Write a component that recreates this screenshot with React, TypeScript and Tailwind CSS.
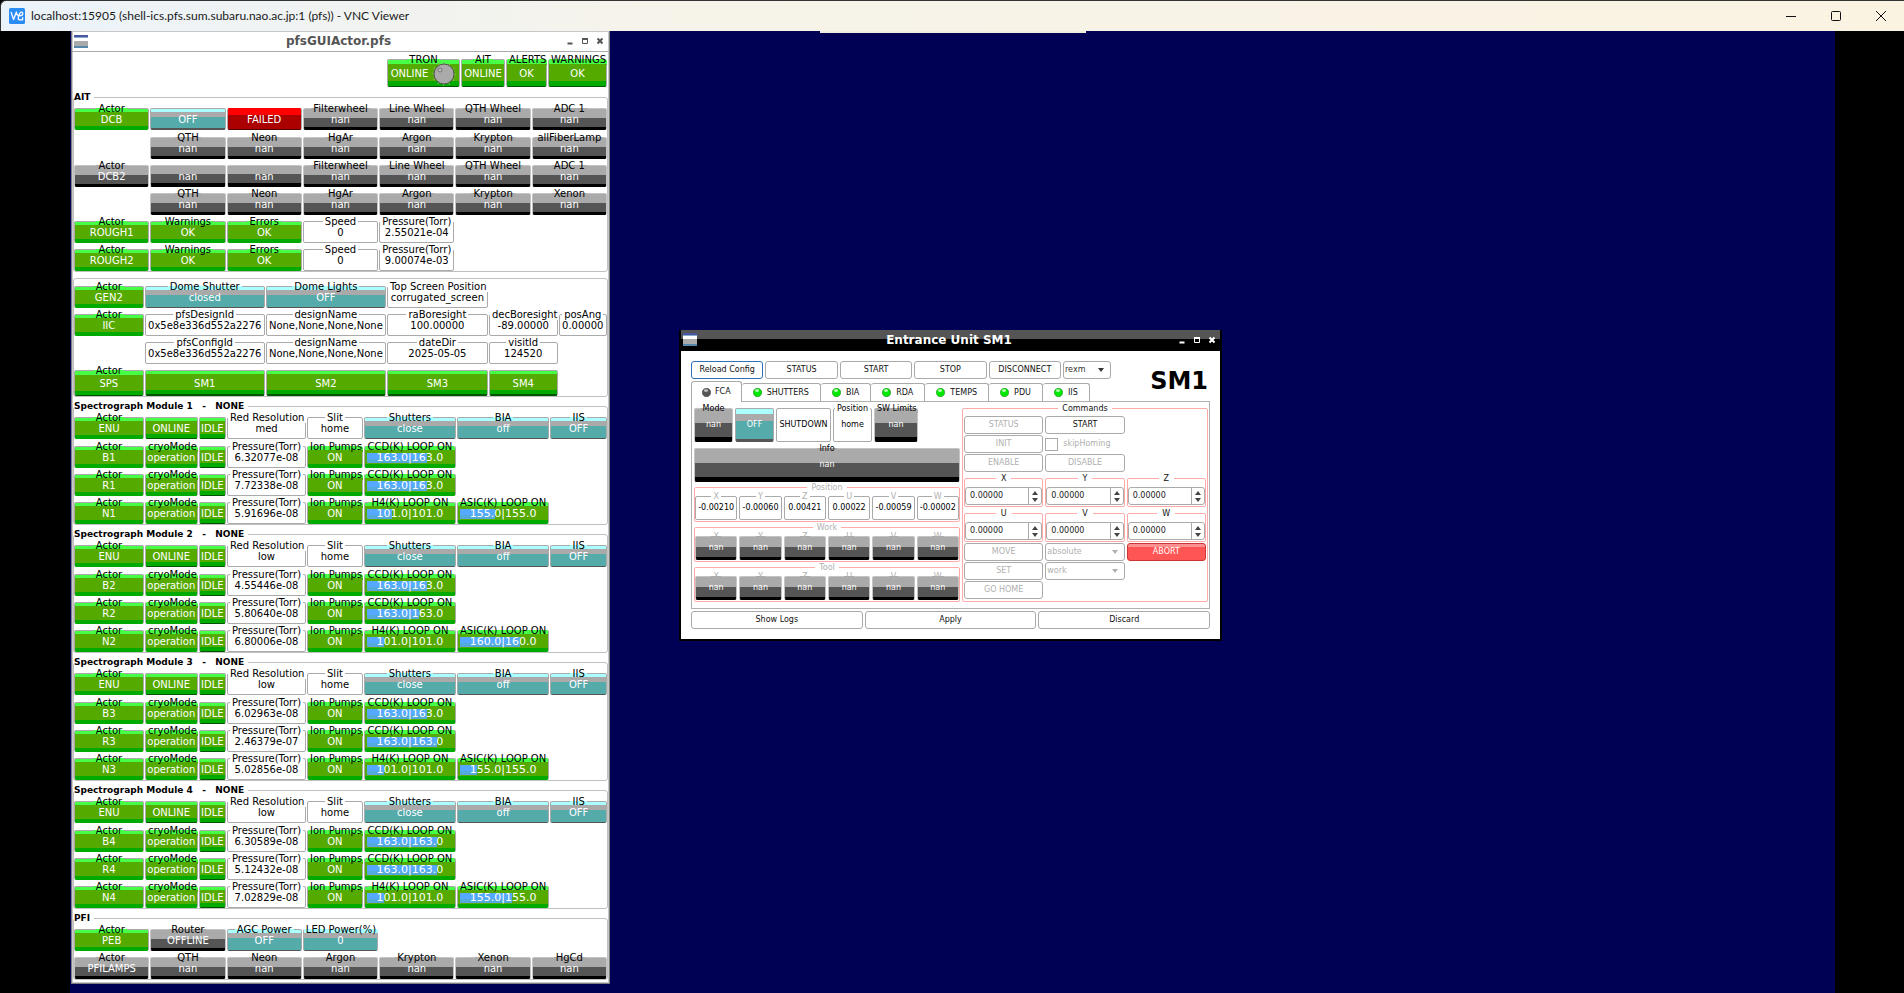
import { ReactNode } from 'react';

type Tone = 'green' | 'teal' | 'gray' | 'red' | 'white';

type Item = {
  label?: string;
  value: string;
  tone: Tone;
  level?: number;
};

const tones: Record<Tone, string> = {
  green:
    'border-[#aaaaaa] border-b-transparent text-white bg-[linear-gradient(to_bottom,#48ff48_17%,#55aa00_17%,#55aa00_77%,#00aa00_77%,#00aa00_94%,#005500_94%)]',
  teal: 'border-[#aaaaaa] border-b-transparent text-white bg-[linear-gradient(to_bottom,#aaffff_18%,#aaaaaa_18%,#aaaaaa_39%,#55aaaa_39%,#55aaaa_92%,#555555_92%)]',
  gray: 'border-[#c4c4c4] border-b-transparent text-white bg-[linear-gradient(to_bottom,#aaaaaa_42%,#555555_42%,#555555_83%,#000000_83%)]',
  red: 'border-[#aaaaaa] border-b-transparent border-t-transparent text-white bg-[linear-gradient(to_bottom,#ff0000_33%,#aa0000_33%,#aa0000_94%,#550000_94%)]',
  white: 'border-[#aaaaaa] bg-white text-black',
};

const moduleCols = 'grid-cols-[69fr_52fr_27fr_78fr_55fr_91fr_91fr_56fr]';
const gen2Cols = 'grid-cols-[69fr_119fr_119fr_100fr_68fr_48fr]';

const nan = (label?: string): Item => ({ label, value: 'nan', tone: 'gray' });
const green = (value: string, label?: string): Item => ({ label, value, tone: 'green' });
const teal = (value: string, label?: string): Item => ({ label, value, tone: 'teal' });
const white = (value: string, label?: string): Item => ({ label, value, tone: 'white' });
const gauge = (label: string, value: string, level: number): Item => ({
  label,
  value,
  tone: 'green',
  level,
});

const wheels = [nan('Filterwheel'), nan('Line Wheel'), nan('QTH Wheel'), nan('ADC 1')];
const lamps = [nan('QTH'), nan('Neon'), nan('HgAr'), nan('Argon'), nan('Krypton')];

const dcb = [green('DCB', 'Actor'), teal('OFF'), { value: 'FAILED', tone: 'red' } as Item, ...wheels];

const aitRows: (Item | null)[][] = [
  [null, ...lamps, nan('allFiberLamp')],
  [{ label: 'Actor', value: 'DCB2', tone: 'gray' }, nan(), nan(), ...wheels],
  [null, ...lamps, nan('Xenon')],
  [green('ROUGH1', 'Actor'), green('OK', 'Warnings'), green('OK', 'Errors'), white('0', 'Speed'), white('2.55021e-04', 'Pressure(Torr)')],
  [green('ROUGH2', 'Actor'), green('OK', 'Warnings'), green('OK', 'Errors'), white('0', 'Speed'), white('9.00074e-03', 'Pressure(Torr)')],
];

const gen2Rows: (Item | null)[][] = [
  [green('GEN2', 'Actor'), teal('closed', 'Dome Shutter'), teal('OFF', 'Dome Lights'), white('corrugated_screen', 'Top Screen Position')],
  [
    green('IIC', 'Actor'),
    white('0x5e8e336d552a2276', 'pfsDesignId'),
    white('None,None,None,None', 'designName'),
    white('100.00000', 'raBoresight'),
    white('-89.00000', 'decBoresight'),
    white('0.00000', 'posAng'),
  ],
  [
    null,
    white('0x5e8e336d552a2276', 'pfsConfigId'),
    white('None,None,None,None', 'designName'),
    white('2025-05-05', 'dateDir'),
    white('124520', 'visitId'),
  ],
];

const spsRow = [green('SPS', 'Actor'), green('SM1'), green('SM2'), green('SM3'), green('SM4')];

const modules = [
  { id: 1, resolution: 'med', pressures: ['6.32077e-08', '7.72338e-08', '5.91696e-08'], ccd: [70, 70], h4: 29, asic: '155.0|155.0', asicLevel: 40 },
  { id: 2, resolution: 'low', pressures: ['4.55446e-08', '5.80640e-08', '6.80006e-08'], ccd: [70, 60], h4: 20, asic: '160.0|160.0', asicLevel: 70 },
  { id: 3, resolution: 'low', pressures: ['6.02963e-08', '2.46379e-07', '5.02856e-08'], ccd: [70, 81], h4: 20, asic: '155.0|155.0', asicLevel: 20 },
  { id: 4, resolution: 'low', pressures: ['6.30589e-08', '5.12432e-08', '7.02829e-08'], ccd: [81, 81], h4: 20, asic: '155.0|155.0', asicLevel: 60 },
];

const pfiRows: Item[][] = [
  [green('PEB', 'Actor'), { label: 'Router', value: 'OFFLINE', tone: 'gray' }, teal('OFF', 'AGC Power'), teal('0', 'LED Power(%)')],
  [{ label: 'Actor', value: 'PFILAMPS', tone: 'gray' }, nan('QTH'), nan('Neon'), nan('Argon'), nan('Krypton'), nan('Xenon'), nan('HgCd')],
];

const axes = ['X', 'Y', 'Z', 'U', 'V', 'W'];
const positions = ['-0.00210', '-0.00060', '0.00421', '0.00022', '-0.00059', '-0.00002'];

function Gauge({ value, level }: { value: string; level: number }) {
  return (
    <div className="grid w-full items-center px-[2px] text-[11px]">
      <div
        className="col-start-1 row-start-1 h-[10px] bg-[linear-gradient(to_bottom,#55aaff_60%,#55aadd_60%)]"
        style={{ width: `${level}%` }}
      />
      <span className="col-start-1 row-start-1 text-center leading-[11px]">{value}</span>
    </div>
  );
}

// Status box of the actor panel, the caption sits on the top border
function Cell({ item, height = 'h-[20px]', children }: { item: Item; height?: string; children?: ReactNode }) {
  const content =
    children ?? (item.level !== undefined ? <Gauge value={item.value} level={item.level} /> : item.value);

  if (!item.label) {
    return (
      <div className={`mt-[5px] rounded-[2px] border bg-origin-border ${tones[item.tone]}`}>
        <div className={`flex items-center justify-center pt-px whitespace-nowrap ${height}`}>{content}</div>
      </div>
    );
  }
  return (
    <fieldset className={`min-w-0 rounded-[2px] border bg-origin-border ${tones[item.tone]}`}>
      <legend className="mx-auto px-[2px] leading-[11px] whitespace-nowrap text-black">{item.label}</legend>
      <div className={`-mt-[5px] flex items-center justify-center pt-px whitespace-nowrap ${height}`}>{content}</div>
    </fieldset>
  );
}

function Row({ items, cols, height }: { items: (Item | null)[]; cols: string; height?: string }) {
  return (
    <div className={`grid gap-x-px ${cols}`}>
      {items.map((item, i) => (item ? <Cell key={i} item={item} height={height} /> : <div key={i} />))}
    </div>
  );
}

function Group({ title, children }: { title: string; children: ReactNode }) {
  return (
    <fieldset className="min-w-0 rounded-[3px] border border-[#c0c0c0]">
      <legend className="pr-1 text-[9px] leading-[12px] font-bold whitespace-pre text-black">{title}</legend>
      <div className="flex flex-col gap-px">{children}</div>
    </fieldset>
  );
}

function SpectrographModule({ module }: { module: (typeof modules)[number] }) {
  const enu = [
    green('ENU', 'Actor'),
    green('ONLINE'),
    green('IDLE'),
    white(module.resolution, 'Red Resolution'),
    white('home', 'Slit'),
    teal('close', 'Shutters'),
    teal('off', 'BIA'),
    teal('OFF', 'IIS'),
  ];
  const camera = (arm: string, i: number) => [
    green(`${arm}${module.id}`, 'Actor'),
    green('operation', 'cryoMode'),
    green('IDLE'),
    white(module.pressures[i], 'Pressure(Torr)'),
    green('ON', 'Ion Pumps'),
  ];

  return (
    <Group title={`Spectrograph Module ${module.id}   -   NONE`}>
      <div className="mb-px">
        <Row items={enu} cols={moduleCols} />
      </div>
      <Row items={[...camera('B', 0), gauge('CCD(K) LOOP ON', '163.0|163.0', module.ccd[0])]} cols={moduleCols} />
      <Row items={[...camera('R', 1), gauge('CCD(K) LOOP ON', '163.0|163.0', module.ccd[1])]} cols={moduleCols} />
      <Row
        items={[
          ...camera('N', 2),
          gauge('H4(K) LOOP ON', '101.0|101.0', module.h4),
          gauge('ASIC(K) LOOP ON', module.asic, module.asicLevel),
        ]}
        cols={moduleCols}
      />
    </Group>
  );
}

function WindowIcon() {
  return (
    <svg width="14" height="13" viewBox="0 0 14 13" aria-hidden="true">
      <rect width="14" height="13" fill="#ffffff" />
      <rect width="14" height="2" fill="#4a55a5" />
      <rect y="2" width="14" height="1" fill="#88aac8" />
      <rect y="6" width="14" height="5" fill="#aaaaaa" />
      <rect y="11" width="14" height="2" fill="#5588aa" />
    </svg>
  );
}

function WindowButtons() {
  return (
    <div className="flex gap-[9px]">
      <button aria-label="Minimize">
        <svg width="6" height="8" viewBox="0 0 6 8">
          <path d="M0.5 6.5H5.5" stroke="currentColor" strokeWidth="2" />
        </svg>
      </button>
      <button aria-label="Maximize">
        <svg width="6" height="8" viewBox="0 0 6 8">
          <path d="M0.5 2V6.5H5.5V2" stroke="currentColor" fill="none" />
          <path d="M0 2H6" stroke="currentColor" strokeWidth="2" />
        </svg>
      </button>
      <button aria-label="Close">
        <svg width="6" height="8" viewBox="0 0 6 8">
          <path d="M0.5 1.5L5.5 6.5M5.5 1.5L0.5 6.5" stroke="currentColor" strokeWidth="2" />
        </svg>
      </button>
    </div>
  );
}

function Dial() {
  return (
    <svg width="24" height="24" viewBox="0 0 24 24" aria-hidden="true">
      <circle cx="12" cy="12" r="11" fill="none" stroke="#88bb66" strokeWidth="2" strokeDasharray="1 4.7" />
      <circle cx="12" cy="12" r="10" fill="#aaaaaa" stroke="#555555" />
      <circle cx="8" cy="8" r="2" fill="#bbbbbb" stroke="#666666" strokeWidth="0.8" />
    </svg>
  );
}

function ActorWindow() {
  return (
    <section className="ml-px w-[539px] border border-t-0 border-[#808080] bg-white text-[10px] text-black shadow-[inset_0_0_0_1px_#c8c8c8]">
      <header className="grid h-[21px] grid-cols-[1fr_auto_1fr] items-center border-b border-[#aaaaaa] pr-[6px] pl-[2px] text-[#555555]">
        <WindowIcon />
        <h2 className="text-[12px] font-bold">pfsGUIActor.pfs</h2>
        <div className="justify-self-end">
          <WindowButtons />
        </div>
      </header>

      <div className="flex flex-col gap-[3px] px-px pt-[2px] pb-[3px]">
        <div className="mb-px grid grid-cols-[73px_44px_41px_59px] justify-end gap-x-px pr-px">
          <Cell item={green('ONLINE', 'TRON')} height="h-[26px]">
            ONLINE
            <span className="ml-1">
              <Dial />
            </span>
          </Cell>
          <Cell item={green('ONLINE', 'AIT')} height="h-[26px]" />
          <Cell item={green('OK', 'ALERTS')} height="h-[26px]" />
          <Cell item={green('OK', 'WARNINGS')} height="h-[26px]" />
        </div>

        <Group title="AIT">
          <div className="mb-px">
            <Row items={dcb} cols="grid-cols-7" />
          </div>
          {aitRows.map((row, i) => (
            <Row key={i} items={row} cols="grid-cols-7" />
          ))}
        </Group>

        <div className="mt-[3px] flex flex-col gap-px rounded-[3px] border border-[#c0c0c0] pt-[2px]">
          {gen2Rows.map((row, i) => (
            <Row key={i} items={row} cols={gen2Cols} />
          ))}
          <Row items={spsRow} cols={gen2Cols} height="h-[24px]" />
        </div>

        {modules.map((module) => (
          <SpectrographModule key={module.id} module={module} />
        ))}

        <Group title="PFI">
          {pfiRows.map((row, i) => (
            <Row key={i} items={row} cols="grid-cols-7" />
          ))}
        </Group>
      </div>
    </section>
  );
}

// Smaller status box used by the device dialogs
function DeviceCell({ item, height, muted }: { item: Item; height: string; muted?: boolean }) {
  if (!item.label) {
    return (
      <div className={`mt-1 rounded-[2px] border bg-origin-border ${tones[item.tone]}`}>
        <div className={`flex items-center justify-center ${height}`}>{item.value}</div>
      </div>
    );
  }
  return (
    <fieldset className={`min-w-0 rounded-[2px] border bg-origin-border ${tones[item.tone]}`}>
      <legend className={`mx-auto px-[2px] leading-[9px] whitespace-nowrap ${muted ? 'text-[#b0b0b0]' : 'text-black'}`}>
        {item.label}
      </legend>
      <div className={`-mt-1 flex items-center justify-center ${height}`}>{item.value}</div>
    </fieldset>
  );
}

function AxisGroup({ title, items }: { title: string; items: Item[] }) {
  return (
    <fieldset className="min-w-0 rounded-[2px] border border-[#ffaaaa] pb-px">
      <legend className="mx-auto px-1 leading-[9px] text-[#b0b0b0]">{title}</legend>
      <div className="grid grid-cols-6 gap-x-[2px]">
        {items.map((item) => (
          <DeviceCell key={item.label} item={item} height="h-[22px]" muted />
        ))}
      </div>
    </fieldset>
  );
}

function PushButton({ children, disabled, focused }: { children: ReactNode; disabled?: boolean; focused?: boolean }) {
  return (
    <button
      disabled={disabled}
      className={`h-[18px] rounded-[3px] border bg-white leading-[10px] disabled:text-[#b0b0b0] ${
        focused ? 'border-[#3070b8]' : 'border-[#aaaaaa]'
      }`}
    >
      {children}
    </button>
  );
}

function Combo({ label, options, disabled }: { label: string; options: string[]; disabled?: boolean }) {
  return (
    <div className={`grid items-center ${disabled ? 'text-[#b0b0b0]' : 'text-[#333333]'}`}>
      <select
        aria-label={label}
        disabled={disabled}
        className="col-start-1 row-start-1 h-[18px] w-full appearance-none rounded-[3px] border border-[#aaaaaa] bg-white px-px leading-[10px] opacity-100"
      >
        {options.map((option) => (
          <option key={option}>{option}</option>
        ))}
      </select>
      <svg className="pointer-events-none col-start-1 row-start-1 mr-[7px] justify-self-end" width="6" height="4" viewBox="0 0 6 4">
        <path d="M0 0H6L3 4Z" fill="currentColor" />
      </svg>
    </div>
  );
}

function SpinBox({ axis }: { axis: string }) {
  return (
    <fieldset className="mt-px min-w-0 rounded-[2px] border border-[#ffaaaa] pt-1 pb-px">
      <legend className="mx-auto px-[5px] leading-[9px]">{axis}</legend>
      <div className="flex h-[18px] rounded-[3px] border border-[#aaaaaa] bg-white">
        <input aria-label={axis} defaultValue="0.00000" className="w-0 flex-1 pl-1 text-[#222222] outline-none" />
        <button aria-label={`Step ${axis}`} className="flex w-[13px] items-center justify-center border-l border-[#aaaaaa]">
          <svg width="6" height="11" viewBox="0 0 6 11">
            <path d="M3 0L6 4H0ZM0 7H6L3 11Z" fill="#444444" />
          </svg>
        </button>
      </div>
    </fieldset>
  );
}

function Led({ on }: { on: boolean }) {
  return (
    <svg width="9" height="9" viewBox="0 0 9 9" aria-hidden="true">
      <circle cx="4.5" cy="4.5" r="4.2" fill={on ? '#00e800' : '#555555'} stroke={on ? '#2a8a2a' : '#444444'} strokeWidth="0.6" />
      <ellipse cx="4" cy="2.6" rx="2.2" ry="1.3" fill={on ? '#b0ffb0' : '#c0c0c0'} />
    </svg>
  );
}

function EntranceUnitWindow() {
  return (
    <section className="absolute top-[299px] left-[609px] w-[543px] border-2 border-t-0 border-black bg-white text-[8px] text-[#111111]">
      <header className="grid h-[21px] grid-cols-[1fr_auto_1fr] items-center bg-[linear-gradient(to_bottom,#555555_45%,#000000_45%)] pr-[5px] pb-[2px] pl-[2px] text-white">
        <WindowIcon />
        <h2 className="text-[12px] font-bold">Entrance Unit SM1</h2>
        <div className="justify-self-end">
          <WindowButtons />
        </div>
      </header>

      <div className="p-[10px]">
        <div className="flex items-center justify-between">
          <div>
            <div className="grid w-[420px] grid-cols-[repeat(5,1fr)_48px] gap-x-[2px]">
              <PushButton focused>Reload Config</PushButton>
              <PushButton>STATUS</PushButton>
              <PushButton>START</PushButton>
              <PushButton>STOP</PushButton>
              <PushButton>DISCONNECT</PushButton>
              <Combo label="Controller" options={['rexm']} />
            </div>
            <div role="tablist" className="mt-[2px] flex h-5 items-end">
              <button
                role="tab"
                aria-selected="true"
                className="relative -mb-px flex h-[21px] items-center gap-1 rounded-t-[3px] border border-b-0 border-[#aaaaaa] bg-white px-[10px]"
              >
                <Led on={false} />
                FCA
              </button>
              {['SHUTTERS', 'BIA', 'RDA', 'TEMPS', 'PDU', 'IIS'].map((tab) => (
                <button
                  key={tab}
                  role="tab"
                  aria-selected="false"
                  className="flex h-[18px] items-center gap-[5px] rounded-t-[3px] border border-b-0 border-l-0 border-[#aaaaaa] px-[11px]"
                >
                  <Led on />
                  {tab}
                </button>
              ))}
            </div>
          </div>
          <h1 className="pr-[2px] text-[24px] leading-[24px] font-bold text-black">SM1</h1>
        </div>

        <div className="flex gap-[2px] border border-[#b0b0b0] pt-[2px] pr-px pb-[6px] pl-[2px]">
          <div className="flex w-[266px] flex-col gap-px">
            <div className="grid grid-cols-[39px_39px_55px_39px_44px] gap-x-[2px]">
              <DeviceCell item={nan('Mode')} height="h-[32px]" />
              <DeviceCell item={teal('OFF')} height="h-[32px]" />
              <DeviceCell item={white('SHUTDOWN')} height="h-[32px]" />
              <DeviceCell item={white('home', 'Position')} height="h-[32px]" />
              <DeviceCell item={nan('SW Limits')} height="h-[32px]" />
            </div>
            <div className="mt-px grid">
              <DeviceCell item={nan('Info')} height="h-[32px]" />
            </div>
            <AxisGroup title="Position" items={axes.map((axis, i) => white(positions[i], axis))} />
            <AxisGroup title="Work" items={axes.map((axis) => nan(axis))} />
            <AxisGroup title="Tool" items={axes.map((axis) => nan(axis))} />
          </div>

          <fieldset className="min-w-0 flex-1 rounded-[2px] border border-[#ffaaaa] px-px">
            <legend className="mx-auto px-1 leading-[9px]">Commands</legend>
            <div className="grid grid-cols-3 gap-x-[2px] gap-y-px pt-[3px]">
              <PushButton disabled>STATUS</PushButton>
              <PushButton>START</PushButton>
              <div />
              <PushButton disabled>INIT</PushButton>
              <label className="flex items-center gap-[5px] text-[#b0b0b0]">
                <input type="checkbox" disabled className="size-[13px] appearance-none border border-[#aaaaaa] bg-white" />
                skipHoming
              </label>
              <div />
              <PushButton disabled>ENABLE</PushButton>
              <PushButton disabled>DISABLE</PushButton>
              <div />
              {axes.map((axis) => (
                <SpinBox key={axis} axis={axis} />
              ))}
              <PushButton disabled>MOVE</PushButton>
              <Combo label="Move mode" options={['absolute']} disabled />
              <button className="h-[18px] rounded-[3px] border border-[#cc3333] bg-[linear-gradient(to_bottom,#ff9090_20%,#ff5555_20%)] leading-[10px] text-white">
                ABORT
              </button>
              <PushButton disabled>SET</PushButton>
              <Combo label="Frame" options={['work']} disabled />
              <div />
              <PushButton disabled>GO HOME</PushButton>
            </div>
          </fieldset>
        </div>

        <div className="mt-[2px] grid grid-cols-3 gap-x-[2px]">
          <PushButton>Show Logs</PushButton>
          <PushButton>Apply</PushButton>
          <PushButton>Discard</PushButton>
        </div>
      </div>
    </section>
  );
}

function ViewerTitleBar() {
  return (
    <header className="flex h-[31px] items-center rounded-tl-[6px] border-t border-l border-[#333333] bg-[linear-gradient(to_right,#ebf3fa,#f6f3ea_35%,#faf3e2)] pr-px pl-2 font-['Lato',sans-serif] text-[12px] text-[#1a1a1a]">
      <svg width="16" height="16" viewBox="0 0 16 16" aria-hidden="true">
        <rect width="16" height="16" rx="1.5" fill="#2b8cf5" />
        <path
          d="M2 4L4.6 11.5L7.4 4Q7.4 7.6 10.6 7.8Q13.8 7.8 13.8 5.6Q13.6 3.6 11.8 4.2Q10.4 5.2 9.4 8.6Q8.6 11.6 10.8 11.8H13.6V9.2"
          fill="none"
          stroke="#ffffff"
          strokeWidth="1.3"
          strokeLinejoin="round"
        />
      </svg>
      <h1 className="ml-[6px] flex-1">localhost:15905 (shell-ics.pfs.sum.subaru.nao.ac.jp:1 (pfs)) - VNC Viewer</h1>
      <button aria-label="Minimize" className="flex w-[45px] justify-center">
        <svg width="10" height="10" viewBox="0 0 10 10">
          <path d="M0 5.5H10" stroke="#111111" />
        </svg>
      </button>
      <button aria-label="Maximize" className="flex w-[45px] justify-center">
        <svg width="10" height="10" viewBox="0 0 10 10">
          <rect x="0.5" y="0.5" width="9" height="9" rx="1" fill="none" stroke="#111111" />
        </svg>
      </button>
      <button aria-label="Close" className="flex w-[45px] justify-center">
        <svg width="10" height="10" viewBox="0 0 10 10">
          <path d="M0 0L10 10M10 0L0 10" stroke="#111111" />
        </svg>
      </button>
    </header>
  );
}

export default function App() {
  return (
    <div className="flex min-h-screen flex-col bg-black font-['DejaVu_Sans',sans-serif]">
      <ViewerTitleBar />
      <main className="relative mr-[69px] ml-[70px] flex-1 bg-[#000055]">
        <ActorWindow />
        <div className="absolute top-0 left-[750px] h-[2px] w-[266px] bg-[#f0ece0]" />
        <EntranceUnitWindow />
      </main>
    </div>
  );
}
